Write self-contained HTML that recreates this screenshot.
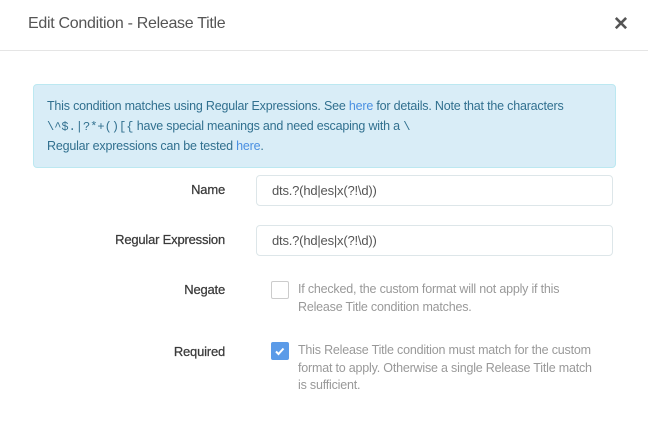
<!DOCTYPE html>
<html><head><style>
body{margin:0;width:648px;height:441px;background:#fff;font-family:"Liberation Sans",sans-serif;position:relative;overflow:hidden;color:#333}
.hdr{position:absolute;left:0;top:0;width:648px;height:50px;border-bottom:1px solid #e5e5e5}
.title{position:absolute;left:28px;top:15px;font-size:16px;color:#555;letter-spacing:-0.3px}
.x{position:absolute;left:613px;top:13px;font-size:19px;font-weight:bold;color:#555}
.alert{position:absolute;left:33px;top:84px;width:583px;height:84px;background:#d9edf7;border:1px solid #bce8f1;border-radius:4px;color:#31708f;font-size:12.5px;line-height:19.5px;box-sizing:border-box;padding:12px 13px;letter-spacing:-0.2px}
.alert a{color:#4a90e2}
.mono{font-family:"Liberation Mono",monospace;font-size:12px;letter-spacing:0}
.lbl{position:absolute;right:423px;font-size:13px;color:#3a3a3a;letter-spacing:-0.2px;-webkit-text-stroke:0.25px #3a3a3a}
.inp{position:absolute;left:256px;width:357px;height:31px;border:1px solid #dde6e9;border-radius:4px;box-sizing:border-box;padding:7px 15px;font-size:13px;color:#555;letter-spacing:-0.2px}
.cb{position:absolute;left:271px;width:18px;height:18px;box-sizing:border-box;border:1px solid #ccc;border-radius:2px}
.help{position:absolute;left:298px;width:300px;font-size:12.5px;line-height:17.5px;color:#999;letter-spacing:-0.2px}
</style></head><body>
<div class="hdr"><div class="title">Edit Condition - Release Title</div><div class="x">✕</div></div>
<div class="alert">This condition matches using Regular Expressions. See <a>here</a> for details. Note that the characters<br><span class="mono">\^$.|?*+()[{</span> have special meanings and need escaping with a <span class="mono">\</span><br>Regular expressions can be tested <a>here</a>.</div>
<div class="lbl" style="top:182px">Name</div>
<div class="inp" style="top:175px">dts.?(hd|es|x(?!\d))</div>
<div class="lbl" style="top:232px">Regular Expression</div>
<div class="inp" style="top:225px">dts.?(hd|es|x(?!\d))</div>
<div class="lbl" style="top:282px">Negate</div>
<div class="cb" style="top:281px"></div>
<div class="help" style="top:281px">If checked, the custom format will not apply if this Release Title condition matches.</div>
<div class="lbl" style="top:344px">Required</div>
<div class="cb" style="top:342px;background:#5b9be8;border-color:#5b9be8"><svg width="16" height="16" viewBox="0 0 16 16" style="position:absolute;left:0;top:0"><path d="M4 8.5l2.5 2.5 5-5.5" stroke="#fff" stroke-width="2" fill="none"/></svg></div>
<div class="help" style="top:342px">This Release Title condition must match for the custom format to apply. Otherwise a single Release Title match is sufficient.</div>
</body></html>
